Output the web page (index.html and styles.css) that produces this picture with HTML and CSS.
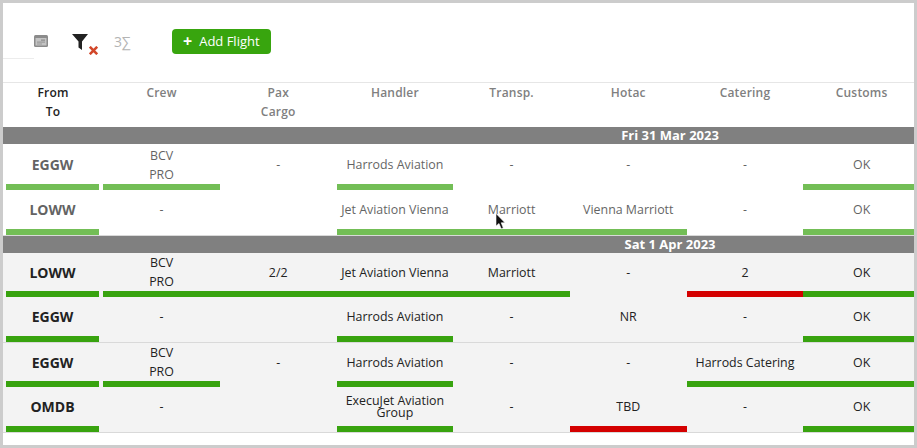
FILE: index.html
```html
<!DOCTYPE html>
<html lang="en">
<head>
<meta charset="utf-8">
<title>Flights</title>
<link rel="stylesheet" href="styles.css">
</head>
<body>
<div class="frame">
  <div class="toolbar">
    <div class="tab-edge"></div>
    <svg class="ico-cal" viewBox="0 0 14 12"><rect x="0" y="0" width="14" height="12" rx="1.5" fill="#8b8b8b"/><rect x="1.5" y="3" width="11" height="7.5" fill="#c4c4c4"/><rect x="7" y="4.5" width="4" height="1.2" fill="#8b8b8b"/><rect x="3" y="6.5" width="8" height="1.2" fill="#9a9a9a"/><rect x="3" y="8.5" width="5" height="1" fill="#9a9a9a"/></svg>
    <div class="filter">
      <svg class="ico-funnel" viewBox="0 0 16 16"><path d="M0 0H16L10 7.5V16L6.5 13.5V7.5Z" fill="#222"/></svg>
      <svg class="ico-x" viewBox="0 0 9 9"><path d="M0.8 0.8L8.2 8.2M8.2 0.8L0.8 8.2" stroke="#d2472a" stroke-width="2.6" fill="none"/></svg>
    </div>
    <span class="sum">3∑</span>
    <button class="add"><span class="plus">+</span>Add Flight</button>
  </div>
  <div class="row head">
    <div class="hcell dark">From<br>To</div>
    <div class="hcell">Crew</div>
    <div class="hcell">Pax<br>Cargo</div>
    <div class="hcell">Handler</div>
    <div class="hcell">Transp.</div>
    <div class="hcell">Hotac</div>
    <div class="hcell">Catering</div>
    <div class="hcell">Customs</div>
  </div>

  <div class="group">Fri 31 Mar 2023</div>
  <div class="row h46 past">
    <div class="cell port ok"><span>EGGW</span></div>
    <div class="cell ok"><span>BCV<br>PRO</span></div>
    <div class="cell"><span>-</span></div>
    <div class="cell ok"><span>Harrods Aviation</span></div>
    <div class="cell"><span>-</span></div>
    <div class="cell"><span>-</span></div>
    <div class="cell"><span>-</span></div>
    <div class="cell ok"><span>OK</span></div>
  </div>
  <div class="row h45 past">
    <div class="cell port ok"><span>LOWW</span></div>
    <div class="cell"><span>-</span></div>
    <div class="cell"><span></span></div>
    <div class="cell ok"><span>Jet Aviation Vienna</span></div>
    <div class="cell ok"><span>Marriott</span></div>
    <div class="cell ok"><span>Vienna Marriott</span></div>
    <div class="cell"><span>-</span></div>
    <div class="cell ok"><span>OK</span></div>
  </div>
  <div class="rule"></div>

  <div class="group">Sat 1 Apr 2023</div>
  <div class="row h44 zebra">
    <div class="cell port ok"><span>LOWW</span></div>
    <div class="cell ok"><span>BCV<br>PRO</span></div>
    <div class="cell ok"><span>2/2</span></div>
    <div class="cell ok"><span>Jet Aviation Vienna</span></div>
    <div class="cell ok"><span>Marriott</span></div>
    <div class="cell"><span>-</span></div>
    <div class="cell bad"><span>2</span></div>
    <div class="cell ok"><span>OK</span></div>
  </div>
  <div class="row h45 zebra">
    <div class="cell port ok"><span>EGGW</span></div>
    <div class="cell"><span>-</span></div>
    <div class="cell"><span></span></div>
    <div class="cell ok"><span>Harrods Aviation</span></div>
    <div class="cell"><span>-</span></div>
    <div class="cell"><span>NR</span></div>
    <div class="cell"><span>-</span></div>
    <div class="cell ok"><span>OK</span></div>
  </div>
  <div class="rule"></div>
  <div class="row h44 zebra">
    <div class="cell port ok"><span>EGGW</span></div>
    <div class="cell ok"><span>BCV<br>PRO</span></div>
    <div class="cell"><span>-</span></div>
    <div class="cell ok"><span>Harrods Aviation</span></div>
    <div class="cell"><span>-</span></div>
    <div class="cell"><span>-</span></div>
    <div class="cell ok"><span>Harrods Catering</span></div>
    <div class="cell ok"><span>OK</span></div>
  </div>
  <div class="row h45 zebra">
    <div class="cell port ok"><span>OMDB</span></div>
    <div class="cell"><span>-</span></div>
    <div class="cell"><span></span></div>
    <div class="cell ok"><span class="tight">ExecuJet Aviation<br>Group</span></div>
    <div class="cell"><span>-</span></div>
    <div class="cell bad"><span>TBD</span></div>
    <div class="cell"><span>-</span></div>
    <div class="cell ok"><span>OK</span></div>
  </div>
  <div class="rule"></div>

  <svg class="cursor" viewBox="0 0 11 17"><path d="M1 0.5V13L4 10.5L6.2 15.8L8.3 14.9L6.2 9.8H10Z" fill="#111" stroke="#fff" stroke-width="0.6"/></svg>
</div>
</body>
</html>
```
FILE: styles.css
```css
* { box-sizing: border-box; }
html, body { margin: 0; padding: 0; }
body {
  width: 917px;
  height: 448px;
  background: #cccccc;
  padding: 3px;
  overflow: hidden;
  font-family: "Open Sans", "Liberation Sans", sans-serif;
  font-size: 12.4px;
  color: #222;
}
.frame {
  position: relative;
  width: 911px;
  height: 442px;
  background: #fff;
  overflow: hidden;
}
.toolbar {
  display: flex;
  align-items: center;
  height: 80px;
  padding-bottom: 3px;
  border-bottom: 1px solid #e6e6e6;
}
.tab-edge {
  align-self: flex-start;
  width: 31px;
  height: 56px;
  border-bottom: 1px solid #ececec;
}
.ico-cal { width: 14px; height: 12px; }
.filter { display: flex; margin-left: 24px; align-items: flex-start; margin-top: 6px; }
.ico-funnel { width: 16px; height: 16px; }
.ico-x { width: 9px; height: 9px; margin: 12px 0 0 1px; }
.sum {
  margin-left: 16px;
  width: 58px;
  font-size: 14px;
  color: #b4b4b4;
}
.add {
  display: flex;
  align-items: center;
  width: 99px;
  height: 25px;
  padding: 0 0 0 11px;
  border: 0;
  border-radius: 4px;
  background: #38a50e;
  color: #fff;
  font: 13px "Open Sans", sans-serif;
}
.plus { font-size: 16px; font-weight: 700; line-height: 1; margin-right: 7px; }
.row {
  display: grid;
  grid-template-columns: 100.2px repeat(7, 116.7px);
  width: 911px;
  overflow: hidden;
}
.head { height: 44px; }
.hcell {
  text-align: center;
  font-size: 12px;
  font-weight: 600;
  line-height: 19px;
  letter-spacing: 0.2px;
  color: #808080;
}
.hcell.dark { color: #222; }
.group {
  height: 17px;
  padding-left: 423px;
  background: #808080;
  color: #fff;
  text-align: center;
  font-size: 13px;
  font-weight: 700;
  line-height: 17px;
}
.h46 { height: 46px; }
.h46 .cell { padding-top: 1px; }
.h45 { height: 45px; }
.h44 { height: 44px; }
.past { opacity: 0.7; }
.zebra { background: #f3f3f3; }
.rule { height: 1px; background: #d9d9d9; }
.cell {
  display: flex;
  align-items: center;
  justify-content: center;
  text-align: center;
  line-height: 19px;
  padding-bottom: 6px;
  white-space: nowrap;
}
.cell.ok { border-bottom: 6px solid #38a30f; padding-bottom: 0; }
.cell.bad { border-bottom: 6px solid #d40000; padding-bottom: 0; }
.cell.port {
  margin: 0 4.2px 0 3px;
  font-size: 14px;
  font-weight: 700;
}
.tight { line-height: 12px; }
.cursor {
  position: absolute;
  left: 492px;
  top: 210px;
  width: 11px;
  height: 17px;
}
```
